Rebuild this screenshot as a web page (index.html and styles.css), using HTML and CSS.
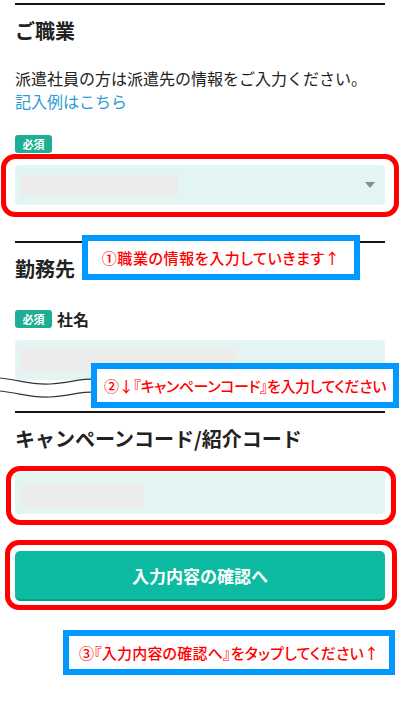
FILE: index.html
```html
<!DOCTYPE html>
<html lang="ja">
<head>
<meta charset="utf-8">
<title>ご職業</title>
<link rel="stylesheet" href="styles.css">
</head>
<body>
<main class="page">
  <div class="form">
    <section class="sec sec-job">
      <h2 class="sec-title">ご職業</h2>
      <p class="note">派遣社員の方は派遣先の情報をご入力ください。<br><a class="link" href="#">記入例はこちら</a></p>
      <div class="field field-job">
        <span class="badge">必須</span>
        <div class="control control-select">
          <span class="ph ph-select"></span>
          <span class="arrow"></span>
          <span class="ring ring-select"></span>
        </div>
      </div>
    </section>

    <section class="sec sec-work">
      <h2 class="sec-title">勤務先</h2>
      <div class="field field-company">
        <div class="label-row"><span class="badge">必須</span><span class="label">社名</span></div>
        <div class="control control-company">
          <span class="ph ph-company"></span>
        </div>
      </div>
    </section>

    <section class="sec sec-code">
      <h2 class="sec-title">キャンペーンコード/紹介コード</h2>
      <div class="control control-code">
        <span class="ph ph-code"></span>
        <span class="ring ring-code"></span>
      </div>
      <div class="btn-wrap">
        <button class="submit" type="button">入力内容の確認へ</button>
        <span class="ring ring-btn"></span>
      </div>
    </section>
  </div>

  <svg class="cut" width="100" height="40" viewBox="0 0 100 40" aria-hidden="true">
    <path d="M0,8 C20,10 30,15 50,14 C70,13 80,8 100,9 L100,40 L0,40 Z" fill="#fff"/>
    <path d="M0,8 C20,10 30,15 50,14 C70,13 80,8 100,9" fill="none" stroke="#333" stroke-width="1.2"/>
    <path d="M0,21 C20,23 30,28 50,27 C70,26 80,21 100,22" fill="none" stroke="#333" stroke-width="1.2"/>
  </svg>

  <div class="callout callout-1">①職業の情報を入力していきます↑</div>
  <div class="callout callout-2">②↓『キャンペーンコード』を入力してください</div>
  <div class="callout callout-3">③『入力内容の確認へ』をタップしてください↑</div>
</main>
</body>
</html>
```

FILE: styles.css
```css
* { box-sizing: border-box; }

html, body {
  margin: 0;
  padding: 0;
  background: #fff;
}

body {
  font-family: "Noto Sans CJK JP", "Noto Sans", sans-serif;
  color: #222;
}

.page {
  position: relative;
  width: 400px;
  height: 715px;
  overflow: hidden;
}

.form {
  padding: 3px 15px 0;
}

.sec {
  border-top: 2px solid #151515;
}

.sec-work { margin-top: 36px; }
.sec-code { margin-top: 31px; }

.sec-title {
  margin: 11px 0 0;
  font-size: 20px;
  line-height: 30px;
  font-weight: 700;
}

.note {
  margin: 21px 0 0;
  font-size: 16px;
  line-height: 23px;
}

.link {
  color: #2a9bd6;
  text-decoration: none;
}

.field-job { margin-top: 22px; }
.field-company { margin-top: 26px; }

.badge {
  display: inline-block;
  width: 37px;
  height: 18px;
  line-height: 18px;
  border-radius: 3px;
  background: #1eae93;
  color: #fff;
  font-size: 11px;
  font-weight: 700;
  text-align: center;
  vertical-align: top;
}

.field-job .badge { display: block; }

.label-row {
  display: flex;
  align-items: center;
  gap: 5px;
  height: 18px;
}

.label {
  font-size: 16px;
  font-weight: 700;
  line-height: 18px;
}

.control {
  position: relative;
  display: flex;
  align-items: center;
  height: 40px;
  margin-top: 12px;
  padding: 0 6px;
  background: #e3f5f3;
  border-radius: 4px;
}

.control-code {
  height: 42px;
  margin-top: 18px;
}

.ph {
  display: block;
  background: #ececec;
}

.ph-select { width: 157px; height: 22px; margin-top: 2px; }
.ph-company { width: 215px; height: 24px; }
.ph-code { width: 122px; height: 23px; margin-top: 5px; }

.arrow {
  position: absolute;
  right: 10px;
  top: 17px;
  width: 0;
  height: 0;
  border-left: 5.5px solid transparent;
  border-right: 5.5px solid transparent;
  border-top: 6px solid #8a8a8a;
}

.ring {
  position: absolute;
  border: 5px solid #ff0000;
  border-radius: 14px;
  pointer-events: none;
}

.ring-select { top: -11px; bottom: -12px; left: -14px; right: -14px; }
.ring-code { top: -6px; bottom: -11px; left: -9px; right: -11px; }
.ring-btn { top: -11px; bottom: -9px; left: -10px; right: -12px; }

.btn-wrap {
  position: relative;
  margin-top: 37px;
}

.submit {
  display: block;
  width: 100%;
  height: 50px;
  padding: 0;
  border: 0;
  border-bottom: 2px solid #0a9f89;
  border-radius: 5px;
  background: #0cbba2;
  color: #fff;
  font-family: "Noto Sans CJK JP", "Noto Sans", sans-serif;
  font-size: 17px;
  font-weight: 700;
}

.cut {
  position: absolute;
  left: 0;
  top: 370px;
}

.callout {
  position: absolute;
  height: 45px;
  border: 6px solid #0099ff;
  background: #fff;
  color: #ff0000;
  display: flex;
  align-items: center;
  justify-content: center;
  white-space: nowrap;
  font-weight: 500;
  font-size: 15px;
  font-feature-settings: "palt";
}

.callout-1 {
  left: 82px;
  top: 235px;
  width: 278px;
  letter-spacing: 0.6px;
}

.callout-2 {
  left: 91px;
  top: 363px;
  width: 308px;
  letter-spacing: -0.4px;
}

.callout-3 {
  left: 63px;
  top: 630px;
  width: 332px;
  letter-spacing: 0.2px;
}
```
